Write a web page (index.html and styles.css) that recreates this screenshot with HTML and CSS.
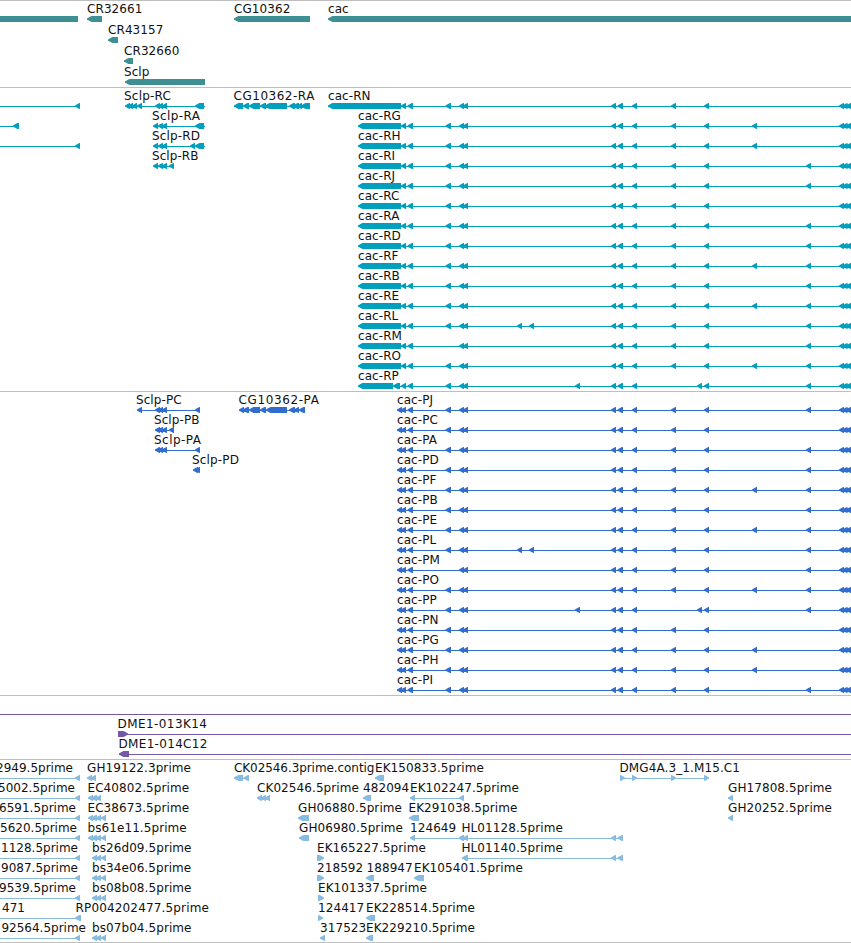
FILE: index.html
```html
<!DOCTYPE html>
<html lang="en">
<head>
    <meta charset="utf-8">
    <title>Genome Browser</title>
    <link rel="stylesheet" href="styles.css">
</head>
<body>
    <div class="browser">
        <div class="track genes" id="genes"></div>
        <div class="track transcripts" id="transcripts"></div>
        <div class="track proteins" id="proteins"></div>
        <div class="track clones" id="clones"></div>
        <div class="track ests" id="ests"></div>
    </div>
    <script src="script.js"></script>
</body>
</html>
```

FILE: styles.css
```css
body {
    margin: 0;
    background: #fff;
    overflow: hidden;
}
.browser {
    border-top: 1px solid #bebebe;
}
.track {
    box-sizing: border-box;
    border-bottom: 1px solid #bebebe;
    overflow: hidden;
}
.row {
    display: block;
    width: 100%;
    height: 20px;
    overflow: visible;
}
.row text {
    font-family: "DejaVu Sans", sans-serif;
    font-size: 12px;
    letter-spacing: 0.08px;
    fill: #111;
}
.genes {
    height: 87px;
    color: #3d8f94;
}
.genes .row {
    height: 21px;
}
.transcripts {
    height: 304px;
    color: #009fbe;
}
.proteins {
    height: 304px;
    color: #316ccf;
}
.clones {
    height: 64px;
    color: #7358a8;
}
.ests {
    height: 183px;
    color: #87bbdf;
}
.row .end {
    text-anchor: end;
    letter-spacing: 0;
}
```

FILE: script.js
```javascript
// feature: [label, label x, exons [[start, end], ...], options]
const END = 851;

// exons shared by all the cac isoforms
const tail = [[611, 616], [617.5, 623], [632, 637], [671, 676], [704, 709]];
const edge = [[839, 844], [842.5, 847.5], [846, 851]];
const mid = [[459, 464], [463, 468]];

function cac(name, x, first, extra, skip) {
    const exons = [...first, [445.5, 451], ...mid, ...tail, ...edge, ...extra.map(s => [s, s + 5])]
        .filter(e => !(skip || []).includes(e[0]));
    return ['cac-' + name, x, exons, {to: END}];
}
const rExons = [[358, 401], [401, 406], [407.5, 413]];
const pExons = [[397, 402], [401, 406], [407.5, 413]];
const r = (n, extra, skip) => cac(n, 358, rExons, extra, skip);
const p = (n, extra, skip) => cac(n, 397, pExons, extra, skip);

const cgR = [[234, 243], [243, 249], [249, 260], [260, 266], [265, 287], [289, 295], [293, 299], [297, 302], [301, 310]];
const cgP = [[239, 244], [243, 249], [249, 260], [260, 266], [266, 287], [289, 295], [294, 299], [299, 305]];
const s3 = [[155, 160], [158, 163], [162, 167]];
const a3 = [[153, 158], [158, 163], [162, 167]];

const tracks = {
    genes: [
        [['', 0, [[0, 78]], {flat: true}], ['CR32661', 87, [[87, 102]]], ['CG10362', 234, [[234, 310]]], ['cac', 328, [[328, 851]]]],
        [['CR43157', 108, [[108, 118]]]],
        [['CR32660', 124, [[124, 133]]]],
        [['Sclp', 124, [[125, 205]]]]
    ],
    transcripts: [
        [['', 0, [[75, 80]], {from: 0}],
         ['Sclp-RC', 124, [[125, 130], [128, 133], [132, 137], [137, 142], ...s3, [195, 204]], {to: 205, width: 47}],
         ['CG10362-RA', 233.5, cgR, {width: 81}],
         cac('RN', 328, [[328, 401], [401, 406], [407.5, 413]], [])],
        [['', 0, [[13, 19]], {from: 0}], ['Sclp-RA', 152, [...a3, [195, 204]], {to: 205, width: 48}], r('RG', [752])],
        [['', 0, [[75, 80]], {from: 0}], ['Sclp-RD', 152, [...a3, [190, 195], [195, 204]], {to: 205, width: 48}], r('RH', [752])],
        [['Sclp-RB', 152, [...a3, [169, 174]], {width: 46.5}], r('RI', [806])],
        [r('RJ', [806])],
        [r('RC', [])],
        [r('RA', [806])],
        [r('RD', [806])],
        [r('RF', [752, 806])],
        [r('RB', [806])],
        [r('RE', [752, 806])],
        [r('RL', [517, 529, 806])],
        [r('RM', [806], [445.5])],
        [r('RO', [752, 806])],
        [cac('RP', 358, [[358, 393], [393, 400], [401, 406], [407.5, 413]], [575, 697, 806], [671])]
    ],
    proteins: [
        [['Sclp-PC', 136, [[137, 142], ...s3, [195, 200]]], ['CG10362-PA', 238.5, cgP, {width: 80.5}], p('PJ', [806])],
        [['Sclp-PB', 154, [...s3, [169, 174]]], p('PC', [])],
        [['Sclp-PA', 154, [...s3, [195, 200]], {width: 47}], p('PA', [806])],
        [['Sclp-PD', 192, [[193, 198], [195, 200]], {width: 47}], p('PD', [806])],
        [p('PF', [752, 806])],
        [p('PB', [806])],
        [p('PE', [752, 806])],
        [p('PL', [517, 529, 806])],
        [p('PM', [806], [445.5])],
        [p('PO', [752, 806])],
        [p('PP', [575, 697, 806], [671])],
        [p('PN', [])],
        [p('PG', [752])],
        [p('PH', [752])],
        [p('PI', [806])]
    ],
    clones: [
        [['', 0, [], {from: 0, to: END}]],
        [['DME1-013K14', 117.5, [[118, 128]], {to: END, right: true, width: 89.5}]],
        [['DME1-014C12', 118.5, [[119, 129]], {to: END, width: 89}]]
    ],
    ests: [
        [['2949.5prime', 73, [[75, 80]], {from: 0, end: true}],
         ['GH19122.3prime', 87, [[87, 92], [91, 96]]],
         ['CK02546.3prime.contig', 234, [[234, 243], [243.5, 249]], {width: 140.5}],
         ['EK150833.5prime', 375, [[375, 384]]],
         ['DMG4A.3_1.M15.C1', 619.5, [[620, 625], [632, 637], [671, 676], [704, 709]], {right: true, width: 120.5}]],
        [['5002.5prime', 75, [[75, 80]], {from: 0, end: true}],
         ['EC40802.5prime', 87.5, [[88, 93], [91.5, 97], [96, 101]]],
         ['CK02546.5prime', 257, [[257, 262], [261, 266], [265, 270]]],
         ['482094', 363, [[363, 371]]],
         ['EK102247.5prime', 410, [[410, 415], [459, 464]]],
         ['GH17808.5prime', 728, [[728, 733]]]],
        [['6591.5prime', 76, [[75, 80]], {from: 0, end: true}],
         ['EC38673.5prime', 87.5, [[88, 93], [91.5, 97], [96, 101], [101, 106]]],
         ['GH06880.5prime', 298, [[298, 305], [301, 309]]],
         ['EK291038.5prime', 408.5, [[409, 419]]],
         ['GH20252.5prime', 728, [[728, 733]]]],
        [['5620.5prime', 77, [[75, 80]], {from: 0, end: true}],
         ['bs61e11.5prime', 87.5, [[88, 93], [91.5, 97], [96, 101], [101, 106]]],
         ['GH06980.5prime', 299, [[299, 309]]],
         ['124649', 410, [[410, 415], [459, 464]]],
         ['HL01128.5prime', 461.5, [[459, 464], [463, 468], [611, 616], [617.5, 623]]]],
        [['1128.5prime', 78, [[75, 80]], {from: 0, end: true}],
         ['bs26d09.5prime', 92, [[92, 97], [96, 101], [101, 106]]],
         ['EK165227.5prime', 317, [[317, 324]], {right: true}],
         ['HL01140.5prime', 461.5, [[462, 468], [611, 616], [617.5, 623]]]],
        [['9087.5prime', 78, [[75, 80]], {from: 0, end: true}],
         ['bs34e06.5prime', 92, [[92, 97], [96, 101], [101, 106]]],
         ['218592', 317, [[317, 324]], {right: true}],
         ['188947', 366.5, [[366, 374]]],
         ['EK105401.5prime', 414, [[414, 424]]]],
        [['9539.5prime', 76, [[75, 80]], {from: 0, end: true}],
         ['bs08b08.5prime', 92, [[92, 97], [96, 101], [101, 106]]],
         ['EK101337.5prime', 318, [[318, 324]], {right: true}]],
        [['471', 25, [[75, 81]], {from: 0, end: true}],
         ['RP004202477.5prime', 75.5, [], {width: 133.5}],
         ['124417', 318, [[318, 323]], {right: true}],
         ['EK228514.5prime', 366, [[366, 375]]]],
        [['92564.5prime', 86, [[75, 80]], {from: 0, end: true}],
         ['bs07b04.5prime', 92, [[92, 97], [96, 101], [101, 106]]],
         ['317523', 320, [[320, 325]]],
         ['EK229210.5prime', 366, [[366, 373]]]]
    ]
};

// exon with an arrow head in the direction of the strand
function exonPath(s, e, opt) {
    if (opt.flat) {
        return `M${s} 15H${e}V21H${s}Z`;
    }
    if (opt.right) {
        return `M${s} 15H${e - 4.5}L${e - 2.5} 16L${e} 17.5V18.5L${e - 2.5} 20L${e - 4.5} 21H${s}Z`;
    }
    return `M${e} 15H${s + 4.5}L${s + 2.5} 16L${s} 17.5V18.5L${s + 2.5} 20L${s + 4.5} 21H${e}Z`;
}

function drawFeature([label, x, exons, opt = {}]) {
    let out = '';
    const from = opt.from !== undefined ? opt.from : Math.min(...exons.map(e => e[0]));
    const to = opt.to !== undefined ? opt.to : Math.max(...exons.map(e => e[1]));
    if (!opt.flat && to > from) {
        out += `<rect x="${from}" y="18" width="${to - from}" height="1" fill="currentColor"/>`;
    }
    if (exons.length) {
        out += `<path d="${exons.map(e => exonPath(e[0], e[1], opt)).join('')}" fill="currentColor"/>`;
    }
    if (label) {
        const cls = opt.end ? ' class="end"' : '';
        const width = opt.width ? ` textLength="${opt.width}"` : '';
        out += `<text x="${x}" y="12"${cls}${width}>${label}</text>`;
    }
    return out;
}

for (const id in tracks) {
    document.getElementById(id).innerHTML = tracks[id]
        .map(row => `<svg class="row">${row.map(drawFeature).join('')}</svg>`)
        .join('');
}
```
